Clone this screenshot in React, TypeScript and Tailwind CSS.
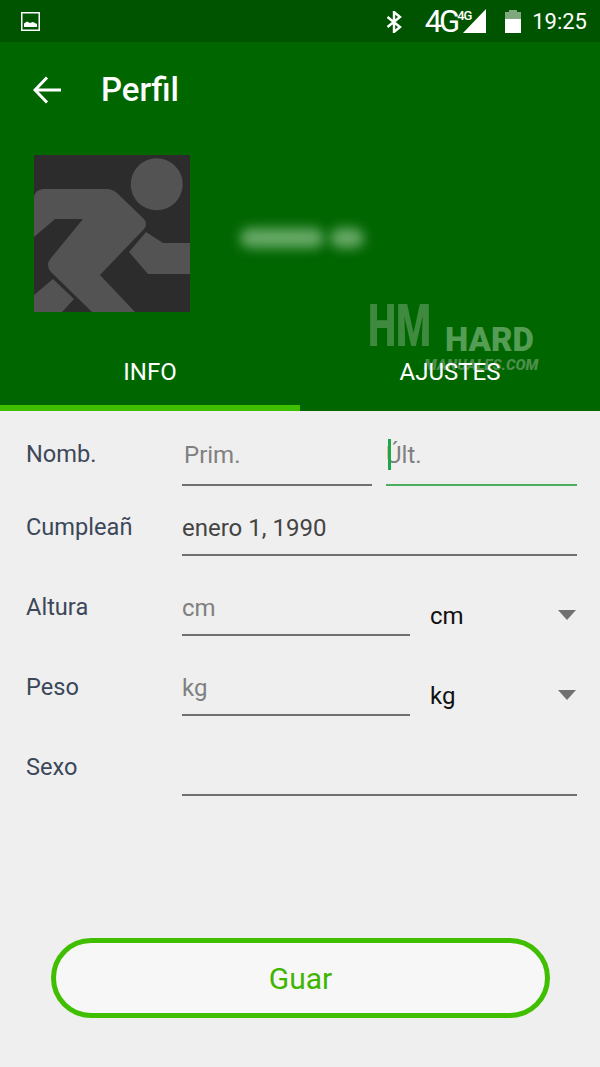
import { ReactNode } from "react";

function StatusBar() {
  return (
    <div className="flex h-[42px] items-center bg-[#005400] pl-[21px] pr-[13px] text-white">
      <svg width="19" height="19" viewBox="0 0 19 19" className="mt-[1px]">
        <rect x="0.75" y="0.75" width="17.5" height="17.5" fill="none" stroke="white" strokeWidth="1.5" />
        <path d="M3 15 V11.5 L6 9.5 L9 11 L12 10 L16 12 V15 Z" fill="white" />
      </svg>
      <svg width="16" height="22" viewBox="0 0 16 22" className="ml-auto mt-[2px]" fill="none" stroke="white" strokeWidth="2.4">
        <path d="M1.5 6 L14 16 L8 21 V1 L14 6 L1.5 16" />
      </svg>
      <span className="ml-[23px] mt-[1px] text-[31px] leading-none tracking-[-3px] font-[Roboto,sans-serif]">4G</span>
      <div className="relative h-[24px] w-[29px]">
        <svg width="23" height="24" viewBox="0 0 23 24" className="absolute bottom-0 right-0">
          <path d="M23 0 V24 H0 Z" fill="white" />
        </svg>
        <span className="absolute left-0 top-0 text-[13px] leading-none font-medium tracking-[-1px] font-[Roboto,sans-serif]">4G</span>
      </div>
      <div className="ml-[19px] mt-[1px] flex h-[23px] w-[16px] flex-col items-center">
        <div className="h-[2px] w-[8px] bg-[#7fa87f]" />
        <div className="h-[7px] w-full bg-[#7fa87f]" />
        <div className="h-[14px] w-full bg-white" />
      </div>
      <span className="ml-[11px] text-[22px] font-[Roboto,sans-serif]">19:25</span>
    </div>
  );
}

function Avatar() {
  return (
    <svg width="156" height="157" viewBox="0 0 156 157" className="shrink-0">
      <rect width="156" height="157" fill="#2c2c2c" />
      <g fill="#535353">
        <circle cx="122.7" cy="29.3" r="26" />
        <path d="M0 44 Q0 34 10 34 H72 Q79 34 84 39 L110 64 Q114 69 110 74 L66 120 L101 157 H58 L17 117 Q11 110 17 103 L49 64 H21 L0 82 Z" />
        <path d="M95 97 L112 77 L129 88 H156 V119 H114 Z" />
        <path d="M0 140 L19 124 L40 144 L28 157 H0 Z" />
      </g>
    </svg>
  );
}

function Row({ label, height, pad, children }: { label: string; height: string; pad: string; children: ReactNode }) {
  return (
    <div className={`flex items-end pl-[26px] pr-[23px] ${height}`}>
      <div className={`w-[156px] shrink-0 text-[23.6px] leading-[28px] text-[#3c4859] ${pad}`}>{label}</div>
      <div className="flex min-w-0 flex-1 items-end">{children}</div>
    </div>
  );
}

function Field({ value, pad = "pt-[3px]", width = "flex-1" }: { value: string; pad?: string; width?: string }) {
  return (
    <div className={width}>
      <div className={`h-[46px] text-[24px] leading-[28px] text-[#808080] ${pad}`}>{value}</div>
      <div className="h-[2px] bg-[#6f6f6f]" />
    </div>
  );
}

function Unit({ value }: { value: string }) {
  return (
    <div className="ml-[20px] flex flex-1 items-center justify-between pb-[6px] pr-[1px] text-[24px] leading-[28px] text-[#111]">
      <span>{value}</span>
      <svg width="18" height="10" viewBox="0 0 18 10" className="mb-[2px]">
        <path d="M0 0 H18 L9 10 Z" fill="#707070" />
      </svg>
    </div>
  );
}

export default function App() {
  return (
    <div className="flex h-[1067px] w-[600px] flex-col overflow-hidden bg-[#efefef] font-[Roboto,sans-serif]">
      <div className="relative h-[411px] shrink-0 bg-[#006600]">
        <StatusBar />
        <div className="flex h-[95px] items-center pl-[33px]">
          <svg width="28" height="28" viewBox="0 0 28 28" fill="none" stroke="white" strokeWidth="3">
            <path d="M28 14 H2 M14 1.5 L2 14 L14 26.5" />
          </svg>
          <span className="ml-[40px] text-[33px] font-medium leading-none text-white">Perfil</span>
        </div>
        <div className="mt-[18px] flex items-center pl-[34px]">
          <Avatar />
          <div className="ml-[50px] mt-[8px] flex gap-[6px]">
            <div className="h-[20px] w-[84px] rounded-full bg-[#66a866] blur-[6px]" />
            <div className="h-[20px] w-[34px] rounded-full bg-[#66a866] blur-[6px]" />
          </div>
        </div>
        <div className="absolute left-[368px] top-[316px] origin-bottom scale-y-150 text-[40px] font-black leading-none text-[#3f8a3f]">HM</div>
        <div className="absolute left-[445px] top-[323px] text-[33px] font-black leading-none text-[#559c55]">HARD</div>
        <div className="absolute left-[424px] top-[358px] text-[15px] font-black italic leading-none text-[#4c8f4c]">MANUALES.COM</div>
        <div className="absolute inset-x-0 bottom-0 flex h-[71px]">
          <div className="flex flex-1 items-center justify-center border-b-[6px] border-[#3fbf00] pb-[1px] text-[24px] text-white">INFO</div>
          <div className="relative flex flex-1 items-center justify-center pb-[7px] text-[24px] text-white">AJUSTES</div>
        </div>
      </div>

      <Row label="Nomb." height="h-[75px]" pad="pb-[18px]">
        <Field value="Prim." width="w-[190px]" pad="pt-[3px] pl-[2px]" />
        <div className="relative ml-[14px] flex-1">
          <div className="h-[46px] pt-[3px] text-[24px] leading-[28px] text-[#808080]">Últ.</div>
          <div className="absolute left-[2px] top-[1px] h-[31px] w-[3px] bg-[#1fa64a]" />
          <div className="h-[2px] bg-[#4caf60]" />
        </div>
      </Row>
      <Row label="Cumpleañ" height="h-[70px]" pad="pb-[15px]">
        <div className="flex-1">
          <div className="h-[41px] pt-[1px] text-[24px] leading-[28px] text-[#444]">enero 1, 1990</div>
          <div className="h-[2px] bg-[#6f6f6f]" />
        </div>
      </Row>
      <Row label="Altura" height="h-[80px]" pad="pb-[15px]">
        <Field value="cm" width="w-[228px]" pad="pt-[6px]" />
        <Unit value="cm" />
      </Row>
      <Row label="Peso" height="h-[80px]" pad="pb-[15px]">
        <Field value="kg" width="w-[228px]" pad="pt-[6px]" />
        <Unit value="kg" />
      </Row>
      <Row label="Sexo" height="h-[80px]" pad="pb-[15px]">
        <Field value="" />
      </Row>

      <button className="ml-[51px] mt-[142px] h-[80px] w-[499px] rounded-full border-[5px] border-[#3fbf00] bg-[#f7f7f7] text-[30px] text-[#3fb500]">
        Guar
      </button>
    </div>
  );
}
